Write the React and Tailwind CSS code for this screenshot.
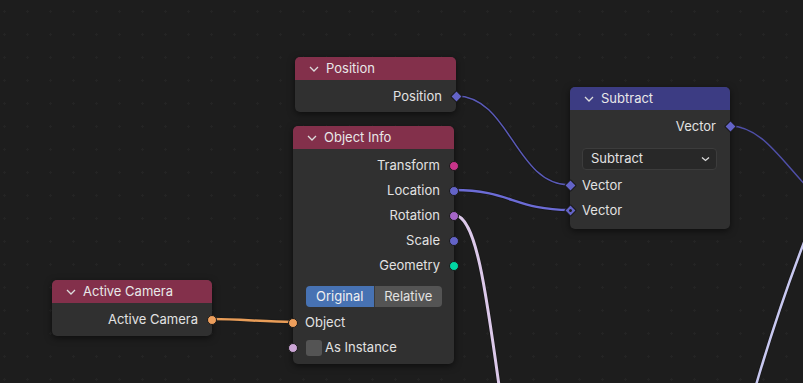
import React from "react";

const FONT = { fontFamily: "Inter, 'Noto Sans', sans-serif" };

function Chevron() {
  return (
    <svg width="10" height="6" viewBox="0 0 10 6" className="shrink-0">
      <polyline points="1,1 5,5 9,1" fill="none" stroke="#dcdcdc" strokeWidth="1.3" />
    </svg>
  );
}

function Socket({ color, side, kind = "circle" }) {
  const pos = side === "right" ? "right-[-6px]" : "left-[-6px]";
  if (kind === "diamond" || kind === "dot") {
    return (
      <div className={`absolute ${pos} top-1/2 -translate-y-1/2 w-[12px] h-[12px] flex items-center justify-center`}>
        <div
          className="w-[9px] h-[9px] rotate-45 rounded-[1px] border border-[#1a1a1a] flex items-center justify-center"
          style={{ background: color }}
        >
          {kind === "dot" && <div className="w-[3px] h-[3px] rounded-full bg-[#1d1d1d]" />}
        </div>
      </div>
    );
  }
  return (
    <div
      className={`absolute ${side === "right" ? "right-[-5px]" : "left-[-5px]"} top-1/2 -translate-y-1/2 w-[10px] h-[10px] rounded-full border border-[#1a1a1a]`}
      style={{ background: color }}
    />
  );
}

function Out({ label, color, kind }) {
  return (
    <div className="relative h-[25px] flex items-center justify-end pr-[14px]">
      <span>{label}</span>
      <Socket color={color} side="right" kind={kind} />
    </div>
  );
}

function In({ label, color, kind, children }) {
  return (
    <div className="relative h-[25px] flex items-center pl-[12px]">
      {children}
      <span>{label}</span>
      <Socket color={color} side="left" kind={kind} />
    </div>
  );
}

function Node({ x, y, w = 161, title, header, className = "", children }) {
  return (
    <div
      className={`absolute rounded-[5px] bg-[#303030] shadow-[0_2px_7px_rgba(0,0,0,0.55)] text-[13px] text-[#e2e2e2] ${className}`}
      style={{ left: x, top: y, width: w }}
    >
      <div className={`h-[23px] rounded-t-[5px] flex items-center gap-[7px] pl-[14px] ${header}`}>
        <Chevron />
        <span className="text-[#e8e8e8]">{title}</span>
      </div>
      {children}
    </div>
  );
}

function Wires() {
  return (
    <svg className="absolute inset-0" width="803" height="383">
      <g fill="none" strokeLinecap="round">
        <path d="M456,96 C510,96 515,185 570,185" stroke="#111" strokeWidth="3" opacity="0.5" />
        <path d="M456,96 C510,96 515,185 570,185" stroke="#5a5ab8" strokeWidth="1.5" />
        <path d="M454,190 C510,190 515,210 570,210" stroke="#111" strokeWidth="4" opacity="0.5" />
        <path d="M454,190 C510,190 515,210 570,210" stroke="#6c6cd6" strokeWidth="2.5" />
        <path d="M454,215 C476,215 486,290 501,400" stroke="#111" strokeWidth="4.5" opacity="0.5" />
        <path d="M454,215 C476,215 486,290 501,400" stroke="#dcc9ea" strokeWidth="3" />
        <path d="M730,126 C762,126 782,162 812,192" stroke="#4f4fa8" strokeWidth="1.5" />
        <path d="M812,222 C792,272 772,330 754,392" stroke="#111" strokeWidth="4" opacity="0.5" />
        <path d="M812,222 C792,272 772,330 754,392" stroke="#c8c8f0" strokeWidth="2.5" />
        <path d="M212,319 C240,319 265,322 293,322" stroke="#1a1a1a" strokeWidth="4.5" opacity="0.7" />
        <path d="M212,319 C240,319 265,322 293,322" stroke="#e99d58" strokeWidth="2.5" />
      </g>
    </svg>
  );
}

export default function App() {
  return (
    <div
      className="relative w-[803px] h-[383px] overflow-hidden bg-[#1d1d1d] bg-[radial-gradient(circle,#242424_1px,transparent_1.2px)] bg-[length:23px_23px] bg-[position:-7px_0px]"
      style={FONT}
    >
      <Wires />

      <Node x={295} y={57} title="Position" header="bg-[#83304b]" className="pb-[3px]">
        <div className="pt-[4px]">
          <Out label="Position" color="#6363c7" kind="diamond" />
        </div>
      </Node>

      <Node x={293} y={126} title="Object Info" header="bg-[#83304b]" className="pb-[4px]">
        <div className="pt-[4px]">
          <Out label="Transform" color="#c7348a" />
          <Out label="Location" color="#6363c7" />
          <Out label="Rotation" color="#a565c8" />
          <Out label="Scale" color="#6363c7" />
          <Out label="Geometry" color="#00d6a3" />
        </div>
        <div className="mt-[8px] mx-[12px] ml-[13px] h-[21px] flex rounded-[4px] overflow-hidden">
          <div className="flex-1 bg-[#4772b3] flex items-center justify-center text-[#f0f0f0]">Original</div>
          <div className="flex-1 bg-[#545454] flex items-center justify-center border-l border-[#3a3a3a]">Relative</div>
        </div>
        <div className="mt-[3px]">
          <In label="Object" color="#ed9e5c" />
          <In label="As Instance" color="#cca6d6">
            <div className="w-[16px] h-[16px] rounded-[3px] bg-[#545454] mr-[3px] ml-[1px]" />
          </In>
        </div>
      </Node>

      <Node x={570} y={87} w={160} title="Subtract" header="bg-[#3c3c83]" className="pb-[6px]">
        <div className="pt-[4px]">
          <Out label="Vector" color="#6363c7" kind="diamond" />
        </div>
        <div className="mt-[9px] mx-[13px] ml-[12px] h-[22px] rounded-[4px] bg-[#282828] border border-[#3c3c3c] flex items-center justify-between pl-[8px] pr-[6px]">
          <span>Subtract</span>
          <svg width="9" height="6" viewBox="0 0 9 6">
            <polyline points="1,1.5 4.5,4.5 8,1.5" fill="none" stroke="#dcdcdc" strokeWidth="1.3" />
          </svg>
        </div>
        <div className="mt-[3px]">
          <In label="Vector" color="#6363c7" kind="diamond" />
          <In label="Vector" color="#6363c7" kind="dot" />
        </div>
      </Node>

      <Node x={52} y={280} w={160} title="Active Camera" header="bg-[#83304b]" className="pb-[4px]">
        <div className="pt-[4px]">
          <Out label="Active Camera" color="#ed9e5c" />
        </div>
      </Node>
    </div>
  );
}
